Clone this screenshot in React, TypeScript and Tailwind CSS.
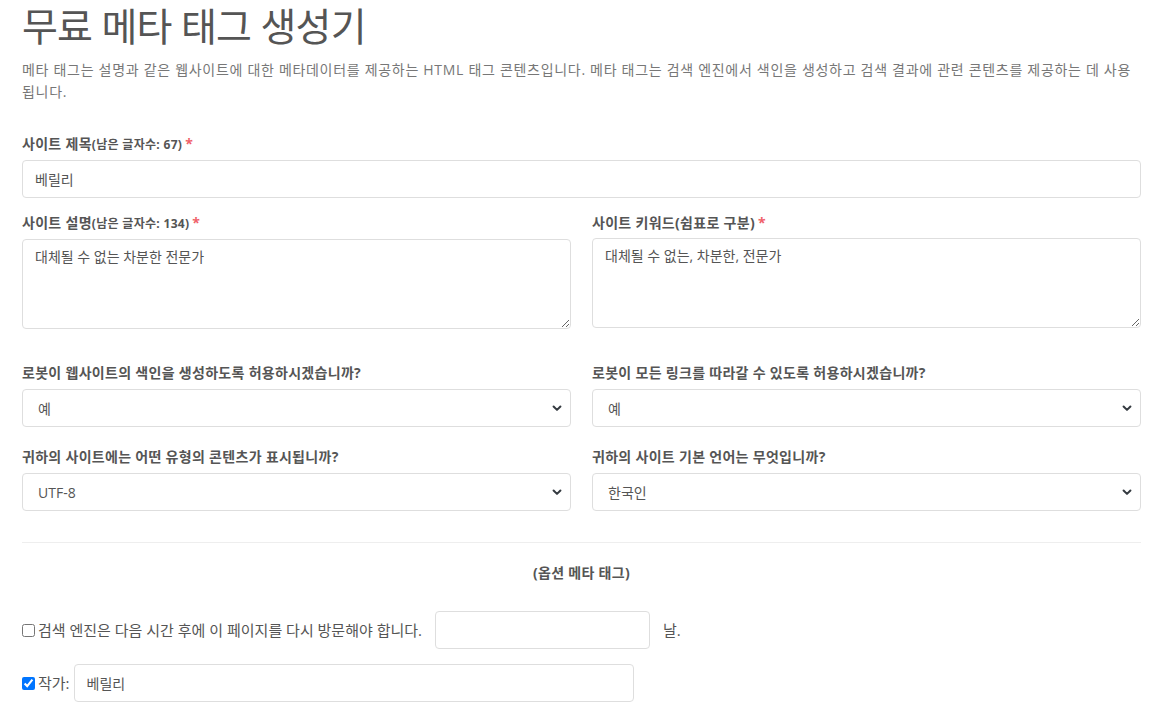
import React from 'react';

const font = { fontFamily: '"Open Sans", "Noto Sans CJK KR", sans-serif' };

const Chevron = () => (
    <svg className="pointer-events-none absolute right-[9px] top-1/2 -translate-y-1/2" width="10" height="10" viewBox="0 0 16 16">
        <path d="M2.5 5.5l5.5 5.5 5.5-5.5" fill="none" stroke="#343a40" strokeWidth="3.2" strokeLinecap="round" strokeLinejoin="round" />
    </svg>
);

const Select: React.FC<{ value: string }> = ({ value }) => (
    <div className="relative">
        <select
            defaultValue={value}
            className="h-[38px] w-full appearance-none rounded-[4px] border border-[#dedede] bg-white pl-[15px] pr-8 text-[14px] text-[#555] outline-none"
        >
            <option>{value}</option>
        </select>
        <Chevron />
    </div>
);

const Star = () => <span className="ml-[3px] text-[14px] text-[#f0616a]">*</span>;

const labelCls = 'block text-[14px] font-bold leading-[20px] tracking-[0.3px]';

export default function App() {
    return (
        <div className="min-h-screen bg-white px-[22px] text-[#555]" style={font}>
            {/* Header */}
            <h1 className="pt-[2px] text-[39px] font-normal leading-[48px] tracking-[-0.8px] text-[#555]">무료 메타 태그 생성기</h1>
            <p className="mt-[9px] text-[14px] leading-[22px] tracking-[0.7px] text-[#777]">
                메타 태그는 설명과 같은 웹사이트에 대한 메타데이터를 제공하는 HTML 태그 콘텐츠입니다. 메타 태그는 검색 엔진에서 색인을 생성하고 검색 결과에 관련 콘텐츠를 제공하는 데 사용됩니다.
            </p>

            {/* Title */}
            <div className="mt-[31px]">
                <label className={labelCls}>
                    사이트 제목<span className="text-[12px]">(남은 글자수: 67)</span>
                    <Star />
                </label>
                <input
                    defaultValue="베릴리"
                    className="mt-[5px] h-[38px] w-full rounded-[4px] border border-[#dedede] px-[12px] text-[14px] text-[#555] outline-none"
                />
            </div>

            {/* Description / Keywords */}
            <div className="mt-[15px] grid grid-cols-2 gap-x-[21px]">
                <div>
                    <label className={labelCls}>
                        사이트 설명<span className="text-[12px]">(남은 글자수: 134)</span>
                        <Star />
                    </label>
                    <textarea
                        defaultValue="대체될 수 없는 차분한 전문가"
                        className="mt-[5px] block h-[90px] w-full rounded-[4px] border border-[#dedede] px-[12px] py-[6px] text-[14px] text-[#555] outline-none"
                    />
                </div>
                <div>
                    <label className={labelCls}>
                        사이트 키워드(쉼표로 구분)
                        <Star />
                    </label>
                    <textarea
                        defaultValue="대체될 수 없는, 차분한, 전문가"
                        className="mt-[5px] block h-[90px] w-full rounded-[4px] border border-[#dedede] px-[12px] py-[6px] text-[14px] text-[#555] outline-none"
                    />
                </div>
            </div>

            {/* Selects */}
            <div className="mt-[34px] grid grid-cols-2 gap-x-[21px] gap-y-[20px]">
                <div>
                    <label className={labelCls}>로봇이 웹사이트의 색인을 생성하도록 허용하시겠습니까?</label>
                    <div className="mt-[6px]"><Select value="예" /></div>
                </div>
                <div>
                    <label className={labelCls}>로봇이 모든 링크를 따라갈 수 있도록 허용하시겠습니까?</label>
                    <div className="mt-[6px]"><Select value="예" /></div>
                </div>
                <div>
                    <label className={labelCls}>귀하의 사이트에는 어떤 유형의 콘텐츠가 표시됩니까?</label>
                    <div className="mt-[6px]"><Select value="UTF-8" /></div>
                </div>
                <div>
                    <label className={labelCls}>귀하의 사이트 기본 언어는 무엇입니까?</label>
                    <div className="mt-[6px]"><Select value="한국인" /></div>
                </div>
            </div>

            <hr className="mt-[31px] border-t border-[#eee]" />

            {/* Optional */}
            <p className="mt-[20px] text-center text-[14px] font-bold leading-[20px] tracking-[0.3px]">(옵션 메타 태그)</p>

            <div className="mt-[28px] flex items-center text-[15px]">
                <input type="checkbox" className="m-0 h-[13px] w-[13px]" />
                <span className="ml-[3px]">검색 엔진은 다음 시간 후에 이 페이지를 다시 방문해야 합니다.</span>
                <input className="ml-[13px] h-[38px] w-[215px] rounded-[4px] border border-[#dedede] px-[12px] outline-none" />
                <span className="ml-[13px]">날.</span>
            </div>

            <div className="mt-[15px] flex items-center text-[15px]">
                <input type="checkbox" defaultChecked className="m-0 h-[13px] w-[13px]" />
                <span className="ml-[3px]">작가:</span>
                <input
                    defaultValue="베릴리"
                    className="ml-[4px] h-[38px] w-[560px] rounded-[4px] border border-[#dedede] px-[12px] text-[14px] text-[#555] outline-none"
                />
            </div>
        </div>
    );
}
